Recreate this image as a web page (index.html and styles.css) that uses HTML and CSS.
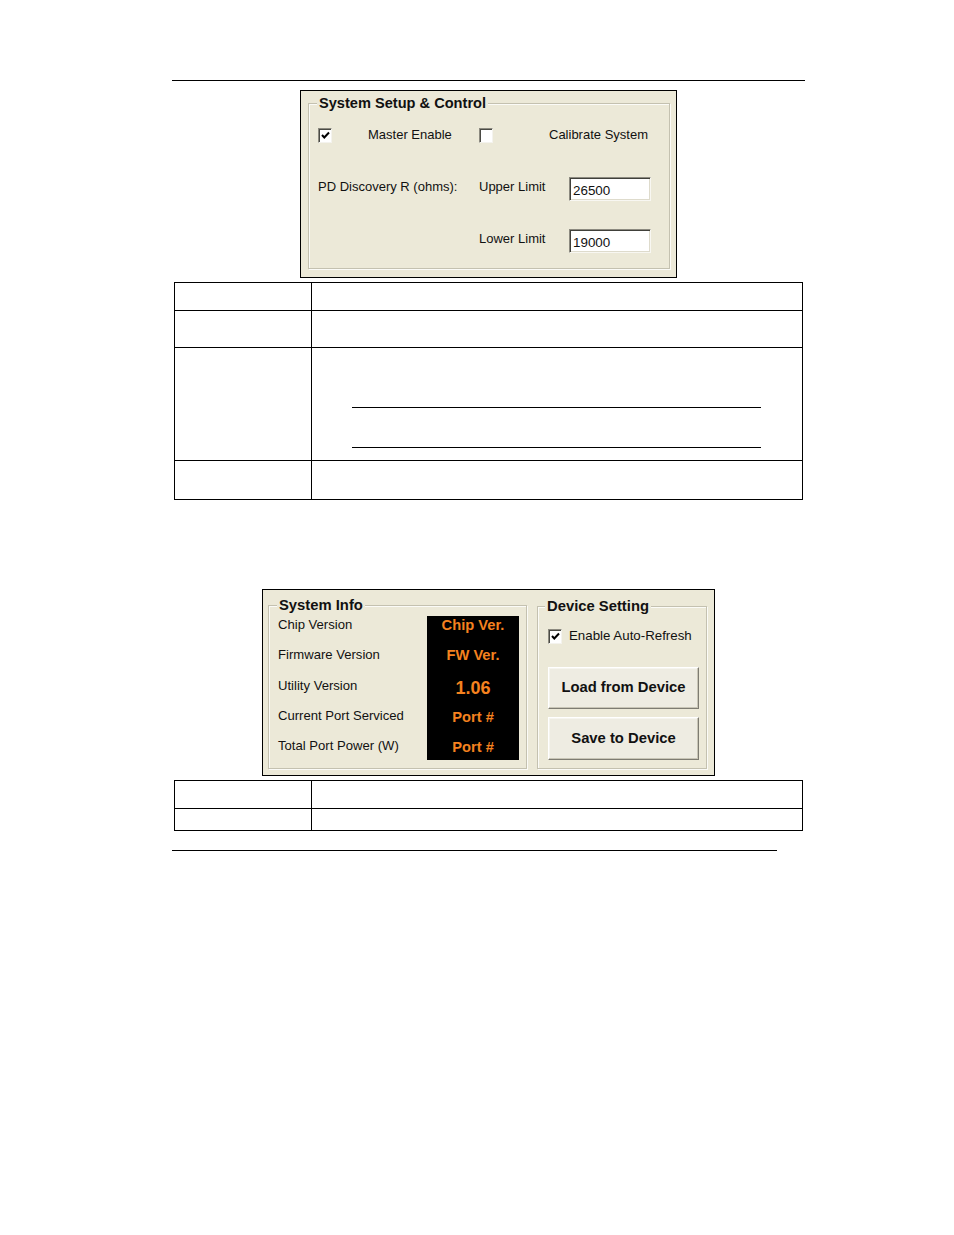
FILE: index.html
```html
<!DOCTYPE html>
<html>
<head>
<meta charset="utf-8">
<link rel="stylesheet" href="styles.css">
</head>
<body>
<div class="doc">
  <div class="rule rule-top"></div>

  <div class="panel panel-setup">
    <div class="group group-setup">
      <span class="legend">System Setup &amp; Control</span>
      <div class="row row-checks">
        <div class="cell-a">
          <span class="check checked"><svg viewBox="0 0 11 11" width="11" height="11"><path d="M2 5 L4.3 7.5 L9 2.5" fill="none" stroke="#000" stroke-width="2"/></svg></span>
          <span class="label lbl-master">Master Enable</span>
        </div>
        <div class="cell-b">
          <span class="check"></span>
          <span class="label lbl-cal">Calibrate System</span>
        </div>
      </div>
      <div class="row row-upper">
        <span class="label cell-a">PD Discovery R (ohms):</span>
        <span class="label cell-mid">Upper Limit</span>
        <span class="field">26500</span>
      </div>
      <div class="row row-lower">
        <span class="cell-a"></span>
        <span class="label cell-mid">Lower Limit</span>
        <span class="field">19000</span>
      </div>
    </div>
  </div>

  <div class="grid-table table-one">
    <div class="c c1"></div><div class="c"></div>
    <div class="c c1"></div><div class="c"></div>
    <div class="c c1"></div>
    <div class="c lines-cell">
      <div class="inner-line line-a"></div>
      <div class="inner-line line-b"></div>
    </div>
    <div class="c c1"></div><div class="c"></div>
  </div>

  <div class="panel panel-info">
    <div class="group group-info">
      <span class="legend">System Info</span>
      <div class="info-body">
        <div class="info-labels">
          <span>Chip Version</span>
          <span>Firmware Version</span>
          <span>Utility Version</span>
          <span>Current Port Serviced</span>
          <span>Total Port Power (W)</span>
        </div>
        <div class="info-values">
          <span>Chip Ver.</span>
          <span>FW Ver.</span>
          <span class="big">1.06</span>
          <span>Port #</span>
          <span>Port #</span>
        </div>
      </div>
    </div>
    <div class="group group-device">
      <span class="legend">Device Setting</span>
      <div class="auto-row">
        <span class="check checked"><svg viewBox="0 0 11 11" width="11" height="11"><path d="M2 5 L4.3 7.5 L9 2.5" fill="none" stroke="#000" stroke-width="2"/></svg></span>
        <span class="label">Enable Auto-Refresh</span>
      </div>
      <div class="btn btn-load">Load from Device</div>
      <div class="btn btn-save">Save to Device</div>
    </div>
  </div>

  <div class="grid-table table-two">
    <div class="c c1"></div><div class="c"></div>
    <div class="c c1"></div><div class="c"></div>
  </div>

  <div class="rule rule-bottom"></div>
</div>
</body>
</html>
```

FILE: styles.css
```css
* { box-sizing: border-box; }
html, body { margin: 0; padding: 0; background: #fff; }
body { font-family: "Liberation Sans", Arial, sans-serif; color: #000; }

.doc { padding: 80px 0 0 172px; }

.rule { height: 1px; background: #000; }
.rule-top { width: 633px; }
.rule-bottom { width: 605px; margin-top: 19px; }

.panel {
  background: #ECE9D8;
  border: 1px solid #000;
}

.group {
  position: relative;
  border: 1px solid #c4c1b0;
  box-shadow: inset 1px 1px 0 #fbfbf7, 1px 1px 0 #fbfbf7;
}
.legend {
  position: absolute;
  top: -9px;
  padding: 0 2px;
  background: #ECE9D8;
  font-weight: bold;
  line-height: 16px;
  white-space: nowrap;
  color: #111;
}

.label { font-size: 13px; line-height: 16px; white-space: nowrap; color: #111; }

.check {
  display: inline-flex;
  align-items: center;
  justify-content: center;
  width: 14px;
  height: 15px;
  background: #fff;
  border-top: 1px solid #8c8a80;
  border-left: 1px solid #8c8a80;
  border-right: 1px solid #f4f3ee;
  border-bottom: 1px solid #f4f3ee;
  box-shadow: inset 1px 1px 0 #4a4a44;
  flex: none;
}
.check svg { display: block; margin: 1px 0 0 1px; }

/* Setup panel */
.panel-setup {
  width: 377px;
  height: 188px;
  margin: 9px 0 0 128px;
  padding: 12px 0 0 7px;
}
.group-setup {
  width: 362px;
  height: 166px;
  padding: 23px 0 0 9px;
}
.group-setup .legend { left: 8px; font-size: 14.6px; }

.row { display: flex; align-items: center; }
.cell-a { width: 161px; display: flex; align-items: center; flex: none; }
.cell-b { display: flex; align-items: center; }
.cell-mid { width: 90px; flex: none; }
.row-checks { height: 16px; }
.lbl-master { margin-left: 36px; }
.lbl-cal { margin-left: 56px; }
.row-upper { height: 24px; margin-top: 34px; }
.row-upper .cell-a { margin-top: -4px; }
.row-upper .cell-mid { margin-top: -4px; }
.row-lower { height: 24px; margin-top: 28px; }
.row-lower .cell-mid { margin-top: -4px; }

.field {
  width: 82px;
  height: 24px;
  background: #fff;
  border-top: 1px solid #8c8a80;
  border-left: 1px solid #8c8a80;
  border-right: 1px solid #f8f7f2;
  border-bottom: 1px solid #f8f7f2;
  box-shadow: inset 1px 1px 0 #40403a, inset -1px -1px 0 #dedbcc;
  font-size: 13.4px;
  line-height: 22px;
  padding: 2px 0 0 3px;
  color: #111;
}

/* Tables */
.grid-table {
  display: grid;
  width: 629px;
  margin-left: 2px;
  grid-template-columns: 137px 1fr;
  border-top: 1px solid #000;
  border-left: 1px solid #000;
}
.c { border-right: 1px solid #000; border-bottom: 1px solid #000; }
.table-one { margin-top: 4px; grid-template-rows: 28px 37px 113px 39px; }
.table-two { margin-top: 4px; grid-template-rows: 28px 22px; }
.lines-cell { padding: 59px 0 0 40px; }
.inner-line { width: 409px; height: 1px; background: #000; }
.line-b { margin-top: 39px; }

/* Info panel */
.panel-info {
  width: 453px;
  height: 187px;
  margin: 89px 0 0 90px;
  padding: 15px 0 0 5px;
  display: flex;
  align-items: flex-start;
  gap: 10px;
}
.group-info {
  width: 259px;
  height: 164px;
  padding: 10px 0 0 9px;
}
.group-info .legend { left: 8px; font-size: 14.8px; }
.info-body { display: flex; }
.info-labels, .info-values {
  display: flex;
  flex-direction: column;
  gap: 12.3px;
}
.info-labels { width: 149px; }
.info-labels span {
  height: 18px;
  line-height: 18px;
  font-size: 13.1px;
  color: #111;
  white-space: nowrap;
}
.info-values {
  width: 92px;
  height: 144px;
  background: #000;
}
.info-values span {
  height: 18px;
  line-height: 18px;
  text-align: center;
  color: #F5821F;
  font-weight: bold;
  font-size: 14.7px;
  white-space: nowrap;
}
.info-values span.big { font-size: 18px; line-height: 20px; margin-top: 1px; }

.group-device {
  width: 170px;
  height: 163px;
  margin-top: 1px;
  padding: 21px 0 0 10px;
}
.group-device .legend { left: 7px; font-size: 14.8px; }
.auto-row { display: flex; align-items: center; gap: 7px; height: 16px; }
.auto-row .label { font-size: 13.3px; }

.btn {
  width: 151px;
  height: 42px;
  background: #EEECE2;
  border-top: 1px solid #fff;
  border-left: 1px solid #fff;
  border-right: 1px solid #7e7c72;
  border-bottom: 1px solid #7e7c72;
  box-shadow: inset -1px -1px 0 #c8c5b6, inset 1px 1px 0 #f6f5ef;
  display: flex;
  align-items: center;
  justify-content: center;
  font-weight: bold;
  font-size: 14.8px;
  color: #111;
  white-space: nowrap;
  padding-bottom: 2px;
}
.btn-load { margin-top: 23px; }
.btn-save { margin-top: 8px; height: 43px; }
```
